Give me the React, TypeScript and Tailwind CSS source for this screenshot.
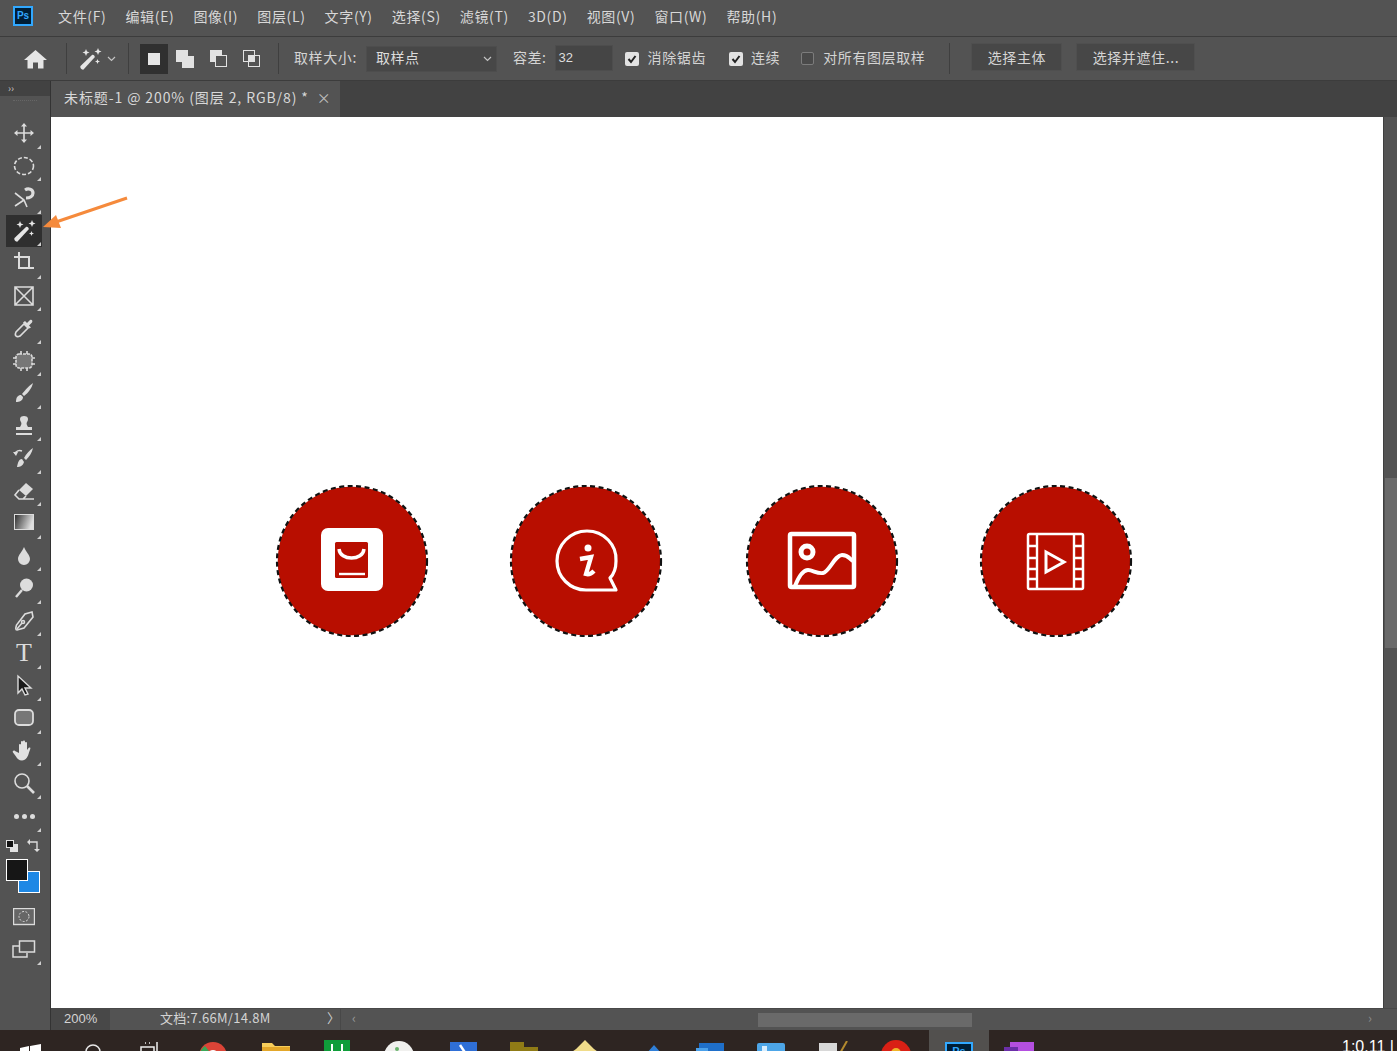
import type { ReactNode } from "react";

const menus = ["文件(F)", "编辑(E)", "图像(I)", "图层(L)", "文字(Y)", "选择(S)", "滤镜(T)", "3D(D)", "视图(V)", "窗口(W)", "帮助(H)"];

function Svg({ children, w = 24, h = 24 }: { children: ReactNode; w?: number; h?: number }) {
  return (
    <svg width={w} height={h} viewBox={`0 0 ${w} ${h}`} fill="none" stroke="#dcdcdc" strokeWidth="1.6">
      {children}
    </svg>
  );
}

function Wand({ size = 24 }: { size?: number }) {
  return (
    <svg width={size} height={size} viewBox="0 0 24 24" fill="#e6e6e6">
      <path d="M2.500 19 14 8c1.200-1 3.500 1.200 2.500 2.500L5.500 22.500c-1.200 1-4-1.800-3-3.500z" />
      <path d="M8 2l1 2.500 2.500 1-2.500 1-1 2.500-1-2.500-2.500-1 2.500-1zM20 1l1 2.500 2.500 1-2.500 1-1 2.500-1-2.500-2.500-1 2.500-1zM19.500 12l.7 1.800 1.800.7-1.800.7-.7 1.800-.7-1.800-1.800-.7 1.800-.7z" />
    </svg>
  );
}

const tools: ReactNode[] = [
  <Svg key="move">
    <path d="M12 3v18M3 12h18" />
    <path d="M12 2l-3 3.500h6zM12 22l-3-3.500h6zM2 12l3.500-3v6zM22 12l-3.500-3v6z" fill="#dcdcdc" stroke="none" />
  </Svg>,
  <Svg key="marquee">
    <ellipse cx="12" cy="12" rx="9.500" ry="8.500" strokeDasharray="4 2" />
  </Svg>,
  <Svg key="lasso">
    <path d="M3 7l9 7 3 7M3 20l9-6" />
    <path d="M13 4c3-2 8-1 8 3 0 3-3 5-7 5" strokeWidth="3.200" />
  </Svg>,
  <Wand key="wand" />,
  <Svg key="crop">
    <path d="M2 6h15v12M7 1v16h15" strokeWidth="2" />
  </Svg>,
  <Svg key="frame">
    <path d="M3 3h18v18H3zM3 3l18 18M21 3L3 21" />
  </Svg>,
  <Svg key="eyedropper">
    <path d="M4 20c-1-1-.5-3 0-4l8-8 4 4-8 8c-1 .5-3 1-4 0z" />
    <path d="M13 5l2 2 3-3c2-1 3 1 2 2.500l-3 3 2 2-2 1-6-6z" fill="#dcdcdc" stroke="none" />
  </Svg>,
  <Svg key="patch">
    <rect x="4" y="5" width="16" height="14" rx="3" fill="#777" strokeDasharray="3 1" />
    <path d="M1 9h3M1 15h3M20 9h3M20 15h3M9 2v3M15 2v3M9 19v3M15 19v3" />
  </Svg>,
  <Svg key="brush">
    <path d="M21 2c-3 2-8 7-11 11l2 2c4-3 8-8 9-13z" fill="#dcdcdc" stroke="none" />
    <path d="M9 14c-3 0-5 2-5 7 3 0 7-1 7-5z" fill="#dcdcdc" stroke="none" />
  </Svg>,
  <Svg key="stamp">
    <path d="M12 2c4 0 5 3 3 6-1 2 0 3 1 5h4v3H4v-3h4c1-2 2-3 1-5-2-3-1-6 3-6z" fill="#dcdcdc" stroke="none" />
    <path d="M4 20h16" strokeWidth="2" />
  </Svg>,
  <Svg key="history">
    <path d="M21 2c-3 2-7 6-9 10l2 2c3-3 6-7 7-12zM10 13c-3 0-4 3-5 8 3 0 6-1 7-5z" fill="#dcdcdc" stroke="none" />
    <path d="M3 8c1-3 4-4 7-3" />
    <path d="M1 6l5 0-2 4z" fill="#dcdcdc" stroke="none" />
  </Svg>,
  <Svg key="eraser">
    <path d="M14 4l7 6-7 7-7-6z" fill="#dcdcdc" stroke="none" />
    <path d="M7 11l-4 5 4 4h15M14 17l-3 3" />
  </Svg>,
  <svg key="gradient" width="20" height="18" viewBox="0 0 20 18">
    <defs>
      <linearGradient id="grad" x1="0" x2="1" y1="0" y2="0.300">
        <stop offset="0" stopColor="#2c2c2c" />
        <stop offset="1" stopColor="#dedede" />
      </linearGradient>
    </defs>
    <rect x="0.500" y="0.500" width="19" height="15" fill="url(#grad)" stroke="#dcdcdc" />
  </svg>,
  <Svg key="blur">
    <path d="M12 3c2 5 6 8 6 12a6 6 0 0 1-12 0c0-4 4-7 6-12z" fill="#dcdcdc" stroke="none" />
  </Svg>,
  <Svg key="dodge">
    <circle cx="14.500" cy="9" r="6.500" fill="#dcdcdc" stroke="none" />
    <path d="M10 14l-6 7" strokeWidth="2.400" />
  </Svg>,
  <Svg key="pen">
    <path d="M20 3l1 5-9 11-7 2c-2 0-1-3-.5-5L13 5z" />
    <path d="M5 20l5-6" />
    <circle cx="11" cy="13" r="1.500" />
  </Svg>,
  <span key="type" className="font-['Liberation_Serif',serif] text-[26px] leading-none text-[#dcdcdc]">T</span>,
  <svg key="select" width="24" height="24" viewBox="0 0 24 24">
    <path d="M6 2v17l4-4 3 6 3-1-3-6h6z" fill="#1b1b1b" stroke="#dcdcdc" strokeWidth="1.400" />
  </svg>,
  <Svg key="shape">
    <rect x="3" y="4" width="18" height="15" rx="4" fill="#777" strokeWidth="1.800" />
  </Svg>,
  <svg key="hand" width="24" height="24" viewBox="0 0 24 24" fill="#e2e2e2">
    <path d="M7 14V6c0-1.500 2-1.500 2 0v4-7c0-1.500 2-1.500 2 0v7V2.500c0-1.500 2-1.500 2 0V10 4c0-1.500 2-1.500 2 0v7c1-1 1.500-3 3-2.500 1 .5 0 2-1 5-1 4-3 8-7 8-3 0-5-2-6-4l-3-4c-1-1.500 1-2.500 2-1.500z" />
  </svg>,
  <Svg key="zoom">
    <circle cx="10" cy="10" r="7" />
    <path d="M15 15l7 7" strokeWidth="2.600" />
  </Svg>,
];

function Corner() {
  return <span className="absolute right-[1px] bottom-[1px] border-b-[4px] border-l-[4px] border-b-[#cfcfcf] border-l-transparent" />;
}

function ToolBar() {
  return (
    <aside className="w-[51px] shrink-0 bg-[#535353] border-r border-[#333333] flex flex-col items-center">
      <div className="w-full h-[15px] bg-[#424242] text-[10px] leading-[14px] pl-[8px] text-[#c4c4c4]">››</div>
      <div className="h-[17px] w-[24px] mt-[4px] border-t border-dotted border-[#666666]" />
      <div className="flex flex-col items-center mr-[2px]">
        {tools.map((icon, i) => (
          <div
            key={i}
            className={`relative h-[32.5px] w-[36px] flex items-center justify-center ${i === 3 ? "bg-[#2f2f2f]" : ""}`}
          >
            {icon}
            <Corner />
          </div>
        ))}
      </div>
      <div className="relative mr-[2px] h-[33px] w-[36px] flex items-center justify-center gap-[3px]">
        <span className="size-[5px] rounded-full bg-[#dcdcdc]" />
        <span className="size-[5px] rounded-full bg-[#dcdcdc]" />
        <span className="size-[5px] rounded-full bg-[#dcdcdc]" />
        <Corner />
      </div>
      <div className="mt-[2px] w-full h-[22px] flex items-center justify-between pl-[6px] pr-[10px]">
        <svg width="12" height="12" viewBox="0 0 12 12">
          <rect x="4" y="4" width="8" height="8" fill="#e2e2e2" />
          <rect x="0.500" y="0.500" width="7" height="7" fill="#111111" stroke="#e2e2e2" />
        </svg>
        <svg width="13" height="13" viewBox="0 0 13 13" fill="none" stroke="#dcdcdc" strokeWidth="1.400">
          <path d="M2 3h8v8" />
          <path d="M0 3l3-3v6zM10 13l-3-3h6z" fill="#dcdcdc" stroke="none" />
        </svg>
      </div>
      <div className="w-full pl-[6px] pt-[2px] h-[40px]">
        <div className="relative size-[34px]">
          <div className="absolute left-[12px] top-[12px] size-[22px] bg-[#1e88e5] border border-white" />
          <div className="absolute left-0 top-0 size-[22px] bg-[#161616] border border-white" />
        </div>
      </div>
      <div className="mt-[4px] mr-[2px] h-[32px] flex items-center">
        <svg width="22" height="18" viewBox="0 0 22 18" fill="none" stroke="#dcdcdc">
          <rect x="0.500" y="0.500" width="21" height="16" strokeWidth="1.400" fill="#666666" />
          <circle cx="11" cy="8.500" r="5" strokeDasharray="2 1.500" />
        </svg>
      </div>
      <div className="relative mr-[2px] h-[33px] w-[36px] flex items-center justify-center">
        <svg width="24" height="18" viewBox="0 0 24 18" fill="none" stroke="#dcdcdc" strokeWidth="1.500">
          <path d="M7 6H1v11h14v-4" />
          <rect x="7.500" y="1" width="15" height="11" />
        </svg>
        <Corner />
      </div>
    </aside>
  );
}

function Check({ on }: { on: boolean }) {
  return on ? (
    <span className="size-[14px] rounded-[2px] bg-[#e2e2e2] flex items-center justify-center">
      <svg width="10" height="10" viewBox="0 0 10 10" fill="none" stroke="#222222" strokeWidth="2">
        <path d="M1.500 5l2.500 3 4.500-6" />
      </svg>
    </span>
  ) : (
    <span className="block size-[13px] rounded-[2px] border border-[#7c7c7c] bg-[#4a4a4a]" />
  );
}

function Sep({ ml, mr }: { ml: string; mr: string }) {
  return <div className={`h-[31px] w-px bg-[#3f3f3f] ${ml} ${mr}`} />;
}

function OptionsBar() {
  return (
    <div className="h-[45px] shrink-0 bg-[#535353] border-t border-b border-[#3c3c3c] flex items-center text-[14px] tracking-[0.6px] text-[#d4d4d4]">
      <div className="ml-[24px] w-[23px] flex justify-center">
        <svg width="23" height="20" viewBox="0 0 23 20" fill="#e6e6e6">
          <path d="M11.500 1L0 11h3.500v8.500h5.500v-6h5v6h5.500V11H23z" />
        </svg>
      </div>
      <Sep ml="ml-[19px]" mr="mr-[11px]" />
      <Wand size={24} />
      <svg className="ml-[5px]" width="9" height="6" viewBox="0 0 9 6" fill="none" stroke="#c4c4c4" strokeWidth="1.200">
        <path d="M1 1l3.500 3.500L8 1" />
      </svg>
      <Sep ml="ml-[12px]" mr="mr-[11px]" />
      <div className="w-[28px] h-[30px] bg-[#303030] flex items-center justify-center">
        <span className="size-[12px] bg-[#e6e6e6]" />
      </div>
      <svg className="ml-[8px]" width="18" height="18" viewBox="0 0 18 18" fill="#e2e2e2">
        <rect x="0" y="0" width="12" height="12" />
        <rect x="6" y="6" width="12" height="12" />
      </svg>
      <svg className="ml-[16px]" width="17" height="17" viewBox="0 0 17 17">
        <rect x="0" y="0" width="12" height="12" fill="#e2e2e2" />
        <rect x="5.500" y="5.500" width="11" height="11" fill="#535353" stroke="#e2e2e2" />
      </svg>
      <svg className="ml-[16px]" width="17" height="17" viewBox="0 0 17 17" fill="none" stroke="#e2e2e2">
        <rect x="0.500" y="0.500" width="11" height="11" />
        <rect x="5.500" y="5.500" width="11" height="11" />
        <rect x="5.500" y="5.500" width="6" height="6" fill="#e2e2e2" />
      </svg>
      <Sep ml="ml-[18px]" mr="mr-[15px]" />
      <span className="pb-[3px]">取样大小:</span>
      <div className="ml-[9px] w-[131px] h-[26px] bg-[#474747] border border-[#4d4d4d] flex items-center justify-between pl-[9px] pr-[4px] text-[#dddddd]">
        <span className="pb-[2px]">取样点</span>
        <svg width="9" height="6" viewBox="0 0 9 6" fill="none" stroke="#c4c4c4" strokeWidth="1.200">
          <path d="M1 1l3.500 3.500L8 1" />
        </svg>
      </div>
      <span className="ml-[16px] pb-[3px]">容差:</span>
      <div className="ml-[8px] mb-[2px] w-[58px] h-[26px] bg-[#454545] border border-[#4d4d4d] pl-[3px] flex items-center text-[13px] tracking-normal text-[#dddddd] font-['Liberation_Sans',sans-serif]">
        32
      </div>
      <div className="ml-[12px]"><Check on /></div>
      <span className="ml-[9px] pb-[3px]">消除锯齿</span>
      <div className="ml-[23px]"><Check on /></div>
      <span className="ml-[8px] pb-[3px]">连续</span>
      <div className="ml-[21px]"><Check on={false} /></div>
      <span className="ml-[9px] pb-[3px]">对所有图层取样</span>
      <Sep ml="ml-[24px]" mr="mr-[21px]" />
      <div className="mb-[3px] w-[91px] h-[28px] bg-[#474747] border border-[#4f4f4f] flex items-center justify-center">选择主体</div>
      <div className="mb-[3px] ml-[14px] w-[119px] h-[28px] bg-[#474747] border border-[#4f4f4f] flex items-center justify-center">选择并遮住...</div>
    </div>
  );
}

function RedCircle({ children, className = "" }: { children: ReactNode; className?: string }) {
  return (
    <svg width="154" height="154" viewBox="0 0 154 154" className={`shrink-0 ${className}`}>
      <circle cx="77" cy="77" r="75" fill="#b80e00" />
      <circle cx="77" cy="77" r="75" fill="none" stroke="#ffffff" strokeWidth="1.500" />
      <circle cx="77" cy="77" r="75" fill="none" stroke="#111111" strokeWidth="2.200" strokeDasharray="5 3.500" />
      {children}
    </svg>
  );
}

function Canvas() {
  return (
    <div className="relative flex-1 bg-white pt-[367px] pl-[224px] flex gap-[80px] items-start">
      <RedCircle>
        <rect x="46" y="44" width="62" height="63" rx="7" fill="#ffffff" />
        <rect x="60" y="58" width="33" height="36" rx="1.500" fill="#b80e00" />
        <path d="M64 65c1 12 24 12 25 0" fill="none" stroke="#fff" strokeWidth="3.400" />
        <path d="M64 90h26" stroke="#fff" strokeWidth="2.400" />
      </RedCircle>
      <RedCircle>
        <path d="M77 106c-16 0-29-13-29-29s13-30 30-30 30 14 29 30c0 7-2 13-6 17l6 12z" fill="none" stroke="#fff" strokeWidth="3.200" strokeLinejoin="round" />
        <circle cx="79" cy="64" r="3.500" fill="#fff" />
        <path d="M71 75l11-2-5 17c3 1 6-1 8-3" fill="none" stroke="#fff" strokeWidth="4.400" />
      </RedCircle>
      <RedCircle className="ml-[2px]">
        <rect x="45" y="50" width="64" height="53" rx="1.500" fill="none" stroke="#fff" strokeWidth="4.500" />
        <circle cx="62" cy="68" r="6" fill="none" stroke="#fff" strokeWidth="5" />
        <path d="M50 102C54 92 58 86 63 86S72 90 78 89S90 71 97 71S104 75 108 77" fill="none" stroke="#fff" strokeWidth="4" />
      </RedCircle>
      <RedCircle>
        <rect x="49" y="50" width="55" height="55" rx="1.500" fill="none" stroke="#ffffff" strokeWidth="2.500" />
        <path d="M58 50v55M95 50v55" stroke="#ffffff" strokeWidth="2.400" />
        <path d="M49 62h9M49 74h9M49 85h9M49 95h9M95 62h9M95 74h9M95 85h9M95 95h9" stroke="#ffffff" strokeWidth="2.500" />
        <path d="M67 68v20l18-10z" fill="none" stroke="#ffffff" strokeWidth="3" />
      </RedCircle>
      {/* arrow lies over the tool bar and the canvas */}
      <svg className="absolute left-[-10px] top-[78px]" width="90" height="40" viewBox="0 0 90 40" fill="none">
        <path d="M86 3L12 28" stroke="#f58a3c" strokeWidth="3" />
        <path d="M2 32l13-12 5 13z" fill="#f58a3c" />
      </svg>
    </div>
  );
}

function Scrollbar() {
  return (
    <div className="w-[14px] shrink-0 bg-[#535353] flex flex-col items-end border-l border-[#3f3f3f]">
      <div className="h-[361px]" />
      <div className="w-[12px] h-[170px] bg-[#6a6a6a]" />
    </div>
  );
}

function StatusBar() {
  return (
    <div className="h-[22px] shrink-0 bg-[#535353] flex items-center text-[#d4d4d4] text-[13px] border-t border-[#484848]">
      <div className="w-[59px] h-full bg-[#484848] pl-[13px] pb-[1px] flex items-center font-['Liberation_Sans',sans-serif] text-[13px]">200%</div>
      <span className="ml-[50px] w-[167px] pb-[3px] tracking-[0.3px]">文档:7.66M/14.8M</span>
      <span className="w-[13px] text-[#cccccc] pb-[3px]">〉</span>
      <div className="w-px h-full bg-[#484848]" />
      <span className="ml-[11px] w-[16px] text-[#9a9a9a] pb-[3px]">‹</span>
      <div className="ml-[390px] w-[214px] h-[14px] bg-[#6a6a6a]" />
      <span className="ml-[396px] text-[#8a8a8a] pb-[3px]">›</span>
    </div>
  );
}

function TaskBar() {
  return (
    <div className="h-[21px] shrink-0 bg-[#2e2522] flex items-start overflow-hidden relative">
      <svg className="ml-[20px] mt-[14px]" width="21" height="10" viewBox="0 0 21 10" fill="#ffffff">
        <path d="M0 4l9-2v8H0zM10 2l11-2v10H10z" />
      </svg>
      <svg className="ml-[43px] mt-[13px]" width="18" height="12" viewBox="0 0 18 12" fill="none" stroke="#e8e8e8" strokeWidth="1.500">
        <circle cx="9" cy="9" r="7" />
      </svg>
      <svg className="ml-[38px] mt-[12px]" width="22" height="12" viewBox="0 0 22 12" fill="none" stroke="#eeeeee" strokeWidth="1.500">
        <path d="M1 5h13v8H1zM5 1h1M9 1h1M17 0v9" />
      </svg>
      <svg className="ml-[36px] mt-[11px]" width="30" height="14" viewBox="0 0 30 14">
        <circle cx="15" cy="15" r="14" fill="#db4437" />
        <path d="M1 15a14 14 0 0 1 6-10l8 10z" fill="#3aa757" />
        <circle cx="15" cy="15" r="6" fill="#ffffff" />
        <circle cx="15" cy="15" r="4" fill="#4285f4" />
      </svg>
      <svg className="ml-[33px] mt-[13px]" width="30" height="12" viewBox="0 0 30 12">
        <path d="M1 0h10l3 3h15v9H1z" fill="#f7ce5b" />
        <path d="M1 4h28v8H1z" fill="#e3a72a" />
      </svg>
      <svg className="ml-[33px] mt-[10px]" width="26" height="14" viewBox="0 0 26 14">
        <rect width="26" height="14" fill="#0f9d3a" />
        <path d="M8 4v8M18 4v8" stroke="#ffffff" strokeWidth="2" />
      </svg>
      <svg className="ml-[34px] mt-[11px]" width="30" height="14" viewBox="0 0 30 14">
        <circle cx="15" cy="15" r="15" fill="#f0f0ee" />
        <circle cx="13" cy="8" r="2" fill="#68b36b" />
      </svg>
      <svg className="ml-[36px] mt-[12px]" width="27" height="12" viewBox="0 0 27 12">
        <rect width="27" height="12" fill="#2f6fd6" />
        <path d="M10 3l6 9" stroke="#ffffff" strokeWidth="2.500" />
      </svg>
      <svg className="ml-[33px] mt-[12px]" width="30" height="12" viewBox="0 0 30 12">
        <path d="M0 0h14v5h14v7H0z" fill="#8f7b16" />
      </svg>
      <svg className="ml-[29px] mt-[10px]" width="32" height="14" viewBox="0 0 32 14">
        <path d="M16 0l9 9 7 5H0l7-5z" fill="#f0dc8a" />
      </svg>
      <svg className="ml-[45px] mt-[15px]" width="16" height="9" viewBox="0 0 16 9">
        <path d="M8 0l8 9H0z" fill="#2f7fd8" />
      </svg>
      <svg className="ml-[34px] mt-[13px]" width="28" height="12" viewBox="0 0 28 12">
        <rect x="3" width="25" height="12" fill="#1f6fc9" />
        <rect y="5" width="12" height="7" fill="#4aa0ea" />
      </svg>
      <svg className="ml-[33px] mt-[13px]" width="28" height="12" viewBox="0 0 28 12">
        <rect width="28" height="12" rx="2" fill="#4da6e8" />
        <rect x="5" y="3" width="5" height="5" fill="#d7eeff" />
      </svg>
      <svg className="ml-[34px] mt-[11px]" width="30" height="14" viewBox="0 0 30 14">
        <path d="M0 2h18v12H0z" fill="#d8d8d8" />
        <path d="M20 14L28 0" stroke="#b48a2e" strokeWidth="2" />
      </svg>
      <svg className="ml-[32px] mt-[10px]" width="30" height="14" viewBox="0 0 30 14">
        <circle cx="15" cy="15" r="15" fill="#d92015" />
        <circle cx="15" cy="13" r="5" fill="#f0b429" />
      </svg>
      <div className="ml-[18px] w-[60px] h-full bg-[#52504e] flex justify-center pt-[12px]">
        <div className="w-[28px] h-[14px] bg-[#001e36] border-t-2 border-x-2 border-[#31a8ff] text-[#31a8ff] text-[11px] leading-[14px] text-center font-bold font-['Liberation_Sans',sans-serif]">
          Ps
        </div>
      </div>
      <svg className="ml-[15px] mt-[12px]" width="30" height="12" viewBox="0 0 30 12">
        <rect x="6" width="24" height="12" fill="#b44fe0" />
        <rect y="5" width="14" height="7" fill="#6b2fa8" />
      </svg>
      <span className="absolute left-[1342px] top-[7px] text-[16px] leading-[20px] text-white whitespace-nowrap font-['Liberation_Sans',sans-serif]">1:0.11 |</span>
    </div>
  );
}

export default function App() {
  return (
    <div className="w-[1397px] h-[1051px] overflow-hidden flex flex-col bg-[#535353] font-['Noto_Sans_CJK_SC','Noto_Sans',sans-serif]">
      {/* MENU */}
      <div className="h-[36px] shrink-0 flex items-center text-[14px] tracking-[0.65px] text-[#d8d8d8] pb-[4px]">
        <div className="ml-[13px] mr-[25px] size-[20px] bg-[#001e36] border-2 border-[#31a8ff] text-[#31a8ff] text-[10px] tracking-normal leading-[15px] text-center font-bold font-['Liberation_Sans',sans-serif]">
          Ps
        </div>
        <div className="flex gap-[19px]">
          {menus.map((m) => (
            <span key={m}>{m}</span>
          ))}
        </div>
      </div>

      <OptionsBar />

      <div className="flex-1 flex min-h-0">
        <ToolBar />
        <div className="flex-1 flex flex-col min-w-0">
          {/* TAB */}
          <div className="h-[36px] shrink-0 bg-[#424242] flex">
            <div className="w-[289px] h-full bg-[#535353] flex items-center pl-[13px] pb-[4px] text-[14px] tracking-[0.9px] text-[#d8d8d8]">
              <span>未标题-1 @ 200% (图层 2, RGB/8) *</span>
              <span className="ml-[8px] text-[#bdbdbd]">×</span>
            </div>
          </div>
          <div className="flex-1 flex min-h-0">
            <Canvas />
            <Scrollbar />
          </div>
          <StatusBar />
        </div>
      </div>

      <TaskBar />
    </div>
  );
}
